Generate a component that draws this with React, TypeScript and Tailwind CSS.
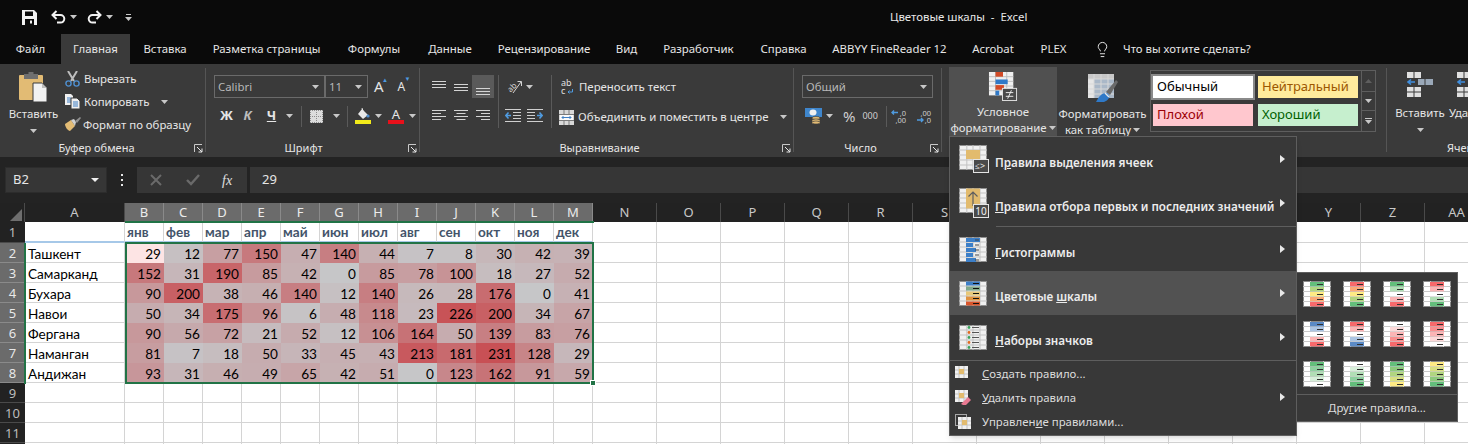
import type { ReactNode } from 'react'
import { Lightbulb } from 'lucide-react'

const UI = "font-['Noto_Sans','Open_Sans',sans-serif]"

const months = ['янв', 'фев', 'мар', 'апр', 'май', 'июн', 'июл', 'авг', 'сен', 'окт', 'ноя', 'дек']
const cities: [string, number[]][] = [
  ['Ташкент', [29, 12, 77, 150, 47, 140, 44, 7, 8, 30, 42, 39]],
  ['Самарканд', [152, 31, 190, 85, 42, 0, 85, 78, 100, 18, 27, 52]],
  ['Бухара', [90, 200, 38, 46, 140, 12, 140, 26, 28, 176, 0, 41]],
  ['Навои', [50, 34, 175, 96, 6, 48, 118, 23, 226, 200, 34, 67]],
  ['Фергана', [90, 56, 72, 21, 52, 12, 106, 164, 50, 139, 83, 76]],
  ['Наманган', [81, 7, 18, 50, 33, 45, 43, 213, 181, 231, 128, 29]],
  ['Андижан', [93, 31, 46, 49, 65, 42, 51, 0, 123, 162, 91, 59]],
]
const columns = ['B', 'C', 'D', 'E', 'F', 'G', 'H', 'I', 'J', 'K', 'L', 'M']
const restColumns = ['N', 'O', 'P', 'Q', 'R', 'S', 'T', 'U', 'V', 'W', 'X', 'Y', 'Z', 'AA']

const tabs: [string, string][] = [
  ['Файл', 'w-[61px]'],
  ['Главная', 'w-[69px] bg-[#3a3a3a]'],
  ['Вставка', 'w-[70px]'],
  ['Разметка страницы', 'w-[133px]'],
  ['Формулы', 'w-[82px]'],
  ['Данные', 'w-[70px]'],
  ['Рецензирование', 'w-[118px]'],
  ['Вид', 'w-[47px]'],
  ['Разработчик', 'w-[97px]'],
  ['Справка', 'w-[73px]'],
  ['ABBYY FineReader 12', 'w-[139px]'],
  ['Acrobat', 'w-[68px]'],
  ['PLEX', 'w-[53px]'],
]

const scales = [
  ['#63be7b', '#b1d580', '#ffeb84', '#fbaa77', '#f8696b'],
  ['#f8696b', '#fbaa77', '#ffeb84', '#b1d580', '#63be7b'],
  ['#63be7b', '#b1deb5', '#ffffff', '#fbb4b5', '#f8696b'],
  ['#f8696b', '#fbb4b5', '#ffffff', '#b1deb5', '#63be7b'],
  ['#5a8ac6', '#acc5e3', '#ffffff', '#fcb5b5', '#f8696b'],
  ['#f8696b', '#fcb5b5', '#ffffff', '#acc5e3', '#5a8ac6'],
  ['#ffffff', '#fddada', '#fcb4b5', '#fa8f90', '#f8696b'],
  ['#f8696b', '#fa8f90', '#fcb4b5', '#fddada', '#ffffff'],
  ['#63be7b', '#8ed09f', '#b1deb5', '#d8efda', '#ffffff'],
  ['#ffffff', '#d8efda', '#b1deb5', '#8ed09f', '#63be7b'],
  ['#63be7b', '#8dc97c', '#b1d580', '#d8e082', '#ffeb84'],
  ['#ffeb84', '#d8e082', '#b1d580', '#8dc97c', '#63be7b'],
]

// colour scale for the value cells, selection tint included
function cellColor(v: number) {
  const t = v / 231
  const r = Math.round(198 + 2 * t)
  const g = Math.round(198 - 118 * t)
  const b = Math.round(200 - 115 * t)
  return `rgb(${r},${g},${b})`
}

function Caret({ className = '' }: { className?: string }) {
  return (
    <svg width="7" height="4" viewBox="0 0 7 4" className={className}>
      <path d="M0 0h7L3.5 4z" fill="#c8c8c8" />
    </svg>
  )
}

function Launcher() {
  return (
    <svg width="9" height="9" viewBox="0 0 9 9" className="justify-self-end">
      <path d="M.5 8V.5H8" fill="none" stroke="#c8c8c8" />
      <path d="M3 3l5 5M8 4.5V8H4.5" fill="none" stroke="#e8e8e8" />
    </svg>
  )
}

function GroupLabel({ text, shift }: { text: string; shift: string }) {
  return (
    <div className="grid grid-cols-[1fr_auto_1fr] items-center h-[16px] text-[11px] text-[#e6e6e6] pr-[2px]">
      <span />
      <span className={shift}>{text}</span>
      <Launcher />
    </div>
  )
}

function Sep() {
  return <div className="w-px h-[84px] mt-1 bg-[#555555] shrink-0" />
}

function ThinSep({ h = 'h-[21px]' }: { h?: string }) {
  return <div className={`w-px ${h} bg-[#5a5a5a] shrink-0`} />
}

function Combo({ text, w }: { text: string; w: string }) {
  return (
    <div className={`${w} h-[23px] border border-[#6a6a6a] flex items-center justify-between pl-[3px] pr-[5px] text-[11.4px] text-[#b8b8b8]`}>
      <span>{text}</span>
      <Caret />
    </div>
  )
}

// ---- ribbon icons ----
function SaveIcon() {
  return (
    <svg width="15" height="15" viewBox="0 0 15 15">
      <path d="M0 0h12l3 3v12H0z" fill="#f2f2f2" />
      <rect x="3" y="1.5" width="8" height="4.5" fill="#0a0a0a" />
      <rect x="3" y="9" width="9" height="6" fill="#0a0a0a" />
      <rect x="8" y="10.5" width="2" height="3" fill="#f2f2f2" />
    </svg>
  )
}

function UndoIcon({ flip = false }: { flip?: boolean }) {
  return (
    <svg width="15" height="14" viewBox="0 0 15 14" className={flip ? '-scale-x-100' : ''}>
      <path d="M5.5 1L1.5 5l4 4M2 5h7.5a3.8 3.8 0 0 1 0 7.6H6" fill="none" stroke="#f2f2f2" strokeWidth="2" />
    </svg>
  )
}

function PasteIcon() {
  return (
    <svg width="29" height="31" viewBox="0 0 29 31">
      <rect x="0" y="3" width="24" height="25" rx="1" fill="#e2bb74" />
      <rect x="5" y="2" width="14" height="5" fill="#6f6f6f" />
      <rect x="9.5" y="0" width="5" height="3" fill="#6f6f6f" />
      <path d="M14 11h9l5 5v14H14z" fill="#f2f2f2" stroke="#3a3a3a" />
      <path d="M23 11v5h5" fill="#bdbdbd" />
    </svg>
  )
}

function CutIcon() {
  return (
    <svg width="15" height="16" viewBox="0 0 15 16">
      <path d="M3 0l6 10M12 0L6 10" stroke="#bdbdbd" strokeWidth="2" fill="none" />
      <circle cx="3.5" cy="12.5" r="2.6" fill="none" stroke="#4f8fd0" strokeWidth="1.4" />
      <circle cx="11.5" cy="12.5" r="2.6" fill="none" stroke="#4f8fd0" strokeWidth="1.4" />
    </svg>
  )
}

function CopyIcon() {
  return (
    <svg width="15" height="15" viewBox="0 0 15 15">
      <path d="M0 0h6l2 2v9H0z" fill="#f0f0f0" />
      <path d="M2 4h4M2 6h4M2 8h4" stroke="#3f7fc4" />
      <path d="M6 4h6l3 3v8H6z" fill="#f0f0f0" stroke="#3a3a3a" />
      <path d="M8 8h5M8 10h5M8 12h5" stroke="#3f7fc4" />
    </svg>
  )
}

function BrushIcon() {
  return (
    <svg width="17" height="15" viewBox="0 0 17 15">
      <path d="M1 7l6-4 4 6-5 5c-2 0-5-4-5-7z" fill="#e2bb74" />
      <path d="M7 3l3-1 2 3-1 4z" fill="#d0d0d0" />
      <path d="M11 4l5-4 1 1-4 5z" fill="#8f8f8f" />
    </svg>
  )
}

function BorderIcon() {
  return (
    <svg width="13" height="13" viewBox="0 0 13 13">
      <rect width="13" height="13" fill="#dcdcdc" />
      <path d="M0 .5h13M0 12.5h13M.5 0v13M12.5 0v13M0 6.5h13M6.5 0v13" stroke="#8c8c8c" strokeDasharray="1 1" />
    </svg>
  )
}

function FillIcon() {
  return (
    <svg width="16" height="16" viewBox="0 0 16 16">
      <path d="M7 1l6 6-5 4-5-5z" fill="#e8e8e8" />
      <circle cx="13" cy="8" r="1.6" fill="#4f8fd0" />
      <path d="M7 0l1 3" stroke="#e8e8e8" />
      <rect x="0" y="12" width="16" height="4" fill="#f2ea1a" />
    </svg>
  )
}

function AlignIcon({ v, h }: { v: 'top' | 'mid' | 'bot' | 'none'; h?: 'l' | 'c' | 'r' }) {
  const ys = v === 'top' ? [2, 5, 8] : v === 'mid' ? [5, 8, 11] : v === 'bot' ? [9, 12, 15] : [2, 5, 8, 11]
  const seg = (i: number) => {
    if (!h) return 'M0 0h14'
    const short = i % 2 === 1
    if (h === 'l') return short ? 'M0 0h9' : 'M0 0h14'
    if (h === 'c') return short ? 'M2.5 0h9' : 'M0 0h14'
    return short ? 'M5 0h9' : 'M0 0h14'
  }
  return (
    <svg width="14" height="16" viewBox="0 0 14 16">
      {ys.map((y, i) => (
        <path key={i} d={seg(i)} transform={`translate(0 ${y + 0.5})`} stroke="#d4d4d4" fill="none" />
      ))}
    </svg>
  )
}

function IndentIcon({ flip = false }: { flip?: boolean }) {
  return (
    <svg width="16" height="14" viewBox="0 0 16 14" className={flip ? '-scale-x-100' : ''}>
      <path d="M0 .5h16M8 3.5h8M8 6.5h8M8 9.5h8M0 12.5h16" stroke="#cfcfcf" fill="none" />
      <path d="M6 6.5H1M3.5 3.5L.8 6.5l2.7 3" stroke="#4f9be0" strokeWidth="1.6" fill="none" />
    </svg>
  )
}

function AngleIcon() {
  return (
    <svg width="17" height="17" viewBox="0 0 17 17">
      <text x="1" y="12" fontSize="8" fill="#d4d4d4" transform="rotate(-45 6 9)" fontFamily="Noto Sans">ab</text>
      <path d="M7 15L15 4M11.5 3.5H15.5V8" stroke="#d4d4d4" fill="none" />
    </svg>
  )
}

function WrapIcon() {
  return (
    <svg width="13" height="16" viewBox="0 0 13 16">
      <text x="0" y="7" fontSize="9" fill="#e0e0e0" fontFamily="Noto Sans">ab</text>
      <text x="0" y="15" fontSize="9" fill="#e0e0e0" fontFamily="Noto Sans">c</text>
      <path d="M11.5 10v3H7M8.5 11.5L7 13l1.5 1.5" stroke="#4f9be0" fill="none" />
    </svg>
  )
}

function MergeIcon() {
  return (
    <svg width="15" height="15" viewBox="0 0 15 15">
      <rect width="15" height="15" fill="#d8d8d8" />
      <path d="M0 4.5h15M0 10.5h15M5 0v4M10 0v4M5 11v4M10 11v4" stroke="#7a7a7a" />
      <rect x="1" y="5" width="13" height="5" fill="#fafafa" />
      <path d="M3 7.5h9M4.5 6L3 7.5 4.5 9M10.5 6L12 7.5 10.5 9" stroke="#3f7fc4" fill="none" />
    </svg>
  )
}

function MoneyIcon() {
  return (
    <svg width="17" height="16" viewBox="0 0 17 16">
      <rect x="0" y="0" width="17" height="9" fill="#3f86cc" />
      <ellipse cx="8" cy="4.5" rx="3.5" ry="3" fill="#f0f0f0" />
      <ellipse cx="11" cy="10" rx="4" ry="1.6" fill="#e2bb74" stroke="#3a3a3a" strokeWidth=".6" />
      <ellipse cx="11" cy="12.5" rx="4" ry="1.6" fill="#e2bb74" stroke="#3a3a3a" strokeWidth=".6" />
      <ellipse cx="11" cy="14.5" rx="4" ry="1.5" fill="#e2bb74" stroke="#3a3a3a" strokeWidth=".6" />
    </svg>
  )
}

function DecimalIcon({ top, bottom, up }: { top: string; bottom: string; up: boolean }) {
  return (
    <svg width="16" height="15" viewBox="0 0 16 15">
      <text x="15" y="6.5" textAnchor="end" fontSize="7.5" fill="#cfcfcf" fontFamily="Noto Sans">{top}</text>
      <text x="15" y="14" textAnchor="end" fontSize="7.5" fill="#cfcfcf" fontFamily="Noto Sans">{bottom}</text>
      {up ? (
        <path d="M7 3.5H1M3 1.5L1 3.5l2 2" stroke="#4f9be0" strokeWidth="1.4" fill="none" />
      ) : (
        <path d="M1 11h6M5 9l2 2-2 2" stroke="#4f9be0" strokeWidth="1.4" fill="none" />
      )}
    </svg>
  )
}

function SheetBase({ children, w = 28, h = 25 }: { children?: ReactNode; w?: number; h?: number }) {
  const xs = [w * 0.28, w * 0.5, w * 0.75]
  const ys = [h * 0.2, h * 0.4, h * 0.6, h * 0.8]
  return (
    <>
      <rect x=".5" y=".5" width={w - 1} height={h - 1} fill="#f0f0f0" stroke="#8f8f8f" />
      {xs.map((x) => (
        <path key={x} d={`M${x} 0v${h}`} stroke="#c2c2c2" />
      ))}
      {ys.map((y) => (
        <path key={y} d={`M0 ${y}h${w}`} stroke="#c2c2c2" />
      ))}
      {children}
    </>
  )
}

function SubBox({ x, y, w, h, children }: { x: number; y: number; w: number; h: number; children?: ReactNode }) {
  return (
    <>
      <rect x={x} y={y} width={w} height={h} fill="#4a4a4a" stroke="#e4e4e4" />
      {children}
    </>
  )
}

function CondFormatIcon() {
  return (
    <svg width="30" height="31" viewBox="0 0 30 31">
      <rect x="0" y="0" width="26" height="25" fill="#f0f0f0" />
      <path d="M0 5h26M0 10h26M0 15h26M0 20h26M7 0v25M19 0v25" stroke="#bdbdbd" />
      <rect x="7" y="0" width="8" height="5" fill="#d24a26" />
      <rect x="7" y="8" width="13" height="5" fill="#2f79c8" />
      <rect x="7" y="14" width="9" height="5" fill="#d24a26" />
      <rect x="7" y="20" width="4" height="5" fill="#2f79c8" />
      <SubBox x={14.5} y={17.5} w={15} h={13}>
        <path d="M18 22h8M18 26h8M24 19.5l-4 9" stroke="#f0f0f0" fill="none" />
      </SubBox>
    </svg>
  )
}

function TableFormatIcon() {
  return (
    <svg width="30" height="29" viewBox="0 0 30 29">
      <rect x="0" y="0" width="26" height="24" fill="#aab8c8" />
      <rect x="0" y="0" width="26" height="5" fill="#c8c8c8" />
      <rect x="0" y="5" width="6" height="19" fill="#e6e6e6" />
      <path d="M0 5h26M0 10h26M0 15h26M0 20h26M6 0v24M13 0v24M20 0v24" stroke="#d8d8d8" />
      <path d="M18 18L28 6l2 2-8 13z" fill="#6a6a6a" />
      <path d="M8 28c3-6 6-9 10-9 2 0 4 2 3 5-1 2-3 3-5 4z" fill="#2f79c8" />
      <path d="M17 19l4 4" stroke="#e8e8e8" strokeWidth="1.4" />
    </svg>
  )
}

function InsertCellsIcon() {
  return (
    <svg width="26" height="25" viewBox="0 0 26 25">
      <path d="M0 0h14v6H0zM0 15h14v10H0z" fill="#e0e0e0" />
      <path d="M7 0v6M0 20h14M7 15v10" stroke="#3a3a3a" />
      <path d="M11 7h15v6H11z" fill="#9aa8b8" />
      <path d="M18 7v6" stroke="#3a3a3a" />
      <path d="M8 10H1M4 7.5L1 10l3 2.5" stroke="#3f8fdf" strokeWidth="1.6" fill="none" />
    </svg>
  )
}

// ---- menu icons ----
function RulesIcon() {
  return (
    <svg width="31" height="28" viewBox="0 0 31 28">
      <SheetBase>
        <rect x="7" y="5" width="14" height="9" fill="#e2bb6e" />
      </SheetBase>
      <SubBox x={14.5} y={14.5} w={15} h={13}>
        <text x="16" y="24" fontSize="9" fill="#f0f0f0" fontFamily="Noto Sans">{'≤>'}</text>
      </SubBox>
    </svg>
  )
}

function TopTenIcon() {
  return (
    <svg width="31" height="30" viewBox="0 0 31 30">
      <SheetBase>
        <rect x="7" y="0.5" width="14" height="20" fill="#e2bb6e" />
        <path d="M14 18V4M9.5 8.5L14 4l4.5 4.5" stroke="#5f5f5f" strokeWidth="1.2" fill="none" />
      </SheetBase>
      <SubBox x={14.5} y={16.5} w={15} h={13}>
        <text x="22" y="26.5" textAnchor="middle" fontSize="10" fill="#f0f0f0" fontFamily="Noto Sans">10</text>
      </SubBox>
    </svg>
  )
}

function DataBarsIcon() {
  return (
    <svg width="28" height="25" viewBox="0 0 28 25">
      <SheetBase>
        {[[0, 14], [5, 7], [10, 10], [15, 7], [20, 10]].map(([y, w]) => (
          <g key={y}>
            <rect x="7" y={y + 1} width={w} height="4" fill="#3c7fc8" />
            <path d={`M16 ${y + 3}h4`} stroke="#444444" />
          </g>
        ))}
      </SheetBase>
    </svg>
  )
}

function ColorScaleIcon() {
  const rows = ['#3c7fc8', '#7fa88c', '#e8c878', '#e0923e', '#d9552a']
  return (
    <svg width="28" height="25" viewBox="0 0 28 25">
      <SheetBase>
        {rows.map((c, i) => (
          <g key={c}>
            <rect x="7" y={i * 5 + 0.5} width="14" height="4" fill={c} />
            <path d={`M14 ${i * 5 + 2.5}h6`} stroke="#111111" />
          </g>
        ))}
      </SheetBase>
    </svg>
  )
}

function IconSetsIcon() {
  const dots = ['#3aa35c', '#e06a20', '#3aa35c', '#e06a20', '#3aa35c']
  return (
    <svg width="28" height="25" viewBox="0 0 28 25">
      <SheetBase>
        {dots.map((c, i) => (
          <g key={i}>
            <circle cx="10" cy={i * 5 + 2.5} r="1.4" fill={c} />
            <path d={`M13 ${i * 5 + 2.5}h7`} stroke="#555555" />
          </g>
        ))}
      </SheetBase>
    </svg>
  )
}

function SmallRule({ variant }: { variant: 'new' | 'clear' | 'manage' }) {
  if (variant === 'manage') {
    return (
      <svg width="16" height="15" viewBox="0 0 16 15">
        <rect x=".5" y=".5" width="11" height="11" fill="none" stroke="#a8a8a8" />
        <rect x="3" y="3" width="13" height="12" fill="#f0f0f0" />
        <path d="M3 7h13M3 11h13M7 3v12M12 3v12" stroke="#c2c2c2" />
        <rect x="7" y="6" width="5" height="5" fill="#e2bb6e" />
      </svg>
    )
  }
  return (
    <svg width="16" height="15" viewBox="0 0 16 15">
      <rect x="0" y="0" width="13" height="12" fill="#f0f0f0" />
      <path d="M0 4h13M0 8h13M4 0v12M9 0v12" stroke="#c2c2c2" />
      <rect x="4" y="3" width="5" height="5" fill="#e2bb6e" />
      {variant === 'clear' && <path d="M6 14l7-7 3 3-5 5H8z" fill="#e87a92" />}
    </svg>
  )
}

function ScaleThumb({ colors }: { colors: string[] }) {
  return (
    <svg width="28" height="26" viewBox="0 0 28 26">
      <rect x=".5" y=".5" width="27" height="25" fill="#ffffff" stroke="#8a8a8a" />
      <path d="M0 5.5h28M0 10.5h28M0 15.5h28M0 20.5h28M7.5 0v26M20.5 0v26" stroke="#c8c8c8" />
      {colors.map((c, i) => (
        <g key={i}>
          <rect x="7" y={i * 5 + 1} width="14" height="4.4" fill={c} />
          <path d={`M14 ${i * 5 + 3.5}h6`} stroke="#303030" />
        </g>
      ))}
    </svg>
  )
}

function Arrow() {
  return (
    <svg width="5" height="8" viewBox="0 0 5 8">
      <path d="M0 0l5 4-5 4z" fill="#e8e8e8" />
    </svg>
  )
}

function BigRow({ icon, label, active }: { icon: ReactNode; label: ReactNode; active?: boolean }) {
  return (
    <div className={`h-[44px] flex items-center pl-[9px] pr-[11px] ${active ? 'bg-[#525252]' : ''}`}>
      <div className="w-[36px] shrink-0 flex">{icon}</div>
      <span className="flex-1 text-[11.7px] font-semibold text-[#ececec] pt-[8px] whitespace-nowrap">{label}</span>
      <Arrow />
    </div>
  )
}

function SmallRow({ icon, label, arrow }: { icon: ReactNode; label: ReactNode; arrow?: boolean }) {
  return (
    <div className="h-[24px] flex items-center pl-[5px] pr-[11px]">
      <div className="w-[27px] shrink-0 flex">{icon}</div>
      <span className="flex-1 text-[11.4px] text-[#dcdcdc] pt-[2px]">{label}</span>
      {arrow && <Arrow />}
    </div>
  )
}

function RowHeader({ n, on }: { n: number; on?: boolean }) {
  return (
    <div className={`flex items-center justify-center pt-[2px] text-[13px] border-b ${UI} ${on ? 'bg-[#6b6b6b] text-[#e8e8e8] border-[#8a8a8a]' : 'bg-[#222222] text-[#bcbcbc] border-[#4a4a4a]'}`}>
      {n}
    </div>
  )
}

export default function App() {
  return (
    <div className={`relative w-[1468px] h-[444px] overflow-hidden bg-white ${UI}`}>
      {/* Title bar + tabs */}
      <div className="bg-[#0a0a0a] h-[64px] flex flex-col">
        <div className="h-[34px] flex items-center text-[11.4px] text-[#e8e8e8]">
          <div className="w-[890px] flex items-center pl-[22px]">
            <SaveIcon />
            <div className="ml-[14px]"><UndoIcon /></div>
            <Caret className="ml-[4px]" />
            <div className="ml-[10px]"><UndoIcon flip /></div>
            <Caret className="ml-[4px]" />
            <svg width="7" height="7" viewBox="0 0 7 7" className="ml-[12px]">
              <path d="M1 .5h5" stroke="#c8c8c8" />
              <path d="M0 3h7L3.5 7z" fill="#c8c8c8" />
            </svg>
          </div>
          <span className="whitespace-pre">Цветовые шкалы  -  Excel</span>
        </div>
        <div className="h-[30px] flex text-[11.4px] text-[#e6e6e6]">
          {tabs.map(([name, cls]) => (
            <div key={name} className={`${cls} flex items-center justify-center whitespace-nowrap`}>{name}</div>
          ))}
          <div className="flex items-center ml-[14px]">
            <Lightbulb size={17} strokeWidth={1.4} className="text-[#e6e6e6]" />
            <span className="ml-[12px]">Что вы хотите сделать?</span>
          </div>
        </div>
      </div>

      {/* Ribbon */}
      <div className="h-[93px] bg-[#3a3a3a] flex text-[#e6e6e6] overflow-hidden">
        {/* Clipboard */}
        <div className="w-[205px] shrink-0 flex flex-col">
          <div className="h-[76px] flex pt-[8px]">
            <div className="w-[65px] pl-[2px] flex flex-col items-center">
              <PasteIcon />
              <span className="text-[11.4px] mt-[2px] leading-[17px]">Вставить</span>
              <Caret className="mt-[7px]" />
            </div>
            <div className="flex flex-col text-[11.4px] -mt-[5px]">
              <div className="h-[23px] flex items-center gap-[4px]"><CutIcon /><span>Вырезать</span></div>
              <div className="h-[23px] flex items-center gap-[4px]"><CopyIcon /><span>Копировать</span><Caret className="ml-[8px]" /></div>
              <div className="h-[23px] -ml-[1px] flex items-center gap-[2px]"><BrushIcon /><span>Формат по образцу</span></div>
            </div>
          </div>
          <GroupLabel text="Буфер обмена" shift="mr-[10px]" />
        </div>
        <Sep />
        {/* Font */}
        <div className="w-[213px] shrink-0 flex flex-col">
          <div className="h-[76px] pt-[11px] pl-[8px]">
            <div className="flex items-center">
              <Combo text="Calibri" w="w-[111px]" />
              <Combo text="11" w="w-[43px]" />
              <span className="ml-[6px] text-[15px] leading-none relative">A<span className="absolute -top-[2px] left-[8px] text-[6px] text-[#4f9be0]">▲</span></span>
              <span className="ml-[14px] text-[12px] leading-none relative">A<span className="absolute -top-[5px] left-[7px] text-[6px] text-[#4f9be0]">▼</span></span>
            </div>
            <div className="flex items-center mt-[7px] h-[22px]">
              <span className="w-[21px] ml-[2px] text-center text-[13px] font-bold">Ж</span>
              <span className="w-[21px] text-center text-[13px] font-bold italic text-[#bcbcbc]">К</span>
              <span className="w-[27px] text-center text-[13px] font-bold underline">Ч</span>
              <Caret className="ml-[1px]" />
              <div className="ml-[8px]"><ThinSep /></div>
              <div className="ml-[8px]"><BorderIcon /></div>
              <Caret className="ml-[10px]" />
              <div className="ml-[7px]"><ThinSep /></div>
              <div className="ml-[7px]"><FillIcon /></div>
              <Caret className="ml-[4px]" />
              <div className="ml-[6px] w-[16px] flex flex-col items-center">
                <span className="text-[13px] leading-[12px]">A</span>
                <div className="w-[16px] h-[4px] bg-[#e8101a]" />
              </div>
              <Caret className="ml-[5px]" />
            </div>
          </div>
          <GroupLabel text="Шрифт" shift="mr-[16px]" />
        </div>
        <Sep />
        {/* Alignment */}
        <div className="w-[373px] shrink-0 flex flex-col">
          <div className="h-[76px] pt-[11px] flex">
            <div className="pl-[8px] flex flex-col">
              <div className="flex items-center h-[23px]">
                <div className="w-[22px] flex justify-center"><AlignIcon v="top" /></div>
                <div className="w-[22px] flex justify-center"><AlignIcon v="mid" /></div>
                <div className="w-[22px] h-[23px] bg-[#5a5a5a] flex items-center justify-center"><AlignIcon v="bot" /></div>
              </div>
              <div className="flex items-center mt-[7px] h-[22px]">
                <div className="w-[22px] flex justify-center"><AlignIcon v="none" h="l" /></div>
                <div className="w-[22px] flex justify-center"><AlignIcon v="none" h="c" /></div>
                <div className="w-[22px] flex justify-center"><AlignIcon v="none" h="r" /></div>
              </div>
            </div>
            <div className="ml-[4px] h-[53px] w-px bg-[#5a5a5a]" />
            <div className="w-[52px] pl-[6px] flex flex-col">
              <div className="h-[23px] flex items-center gap-[3px] pl-[1px]"><AngleIcon /><Caret /></div>
              <div className="h-[22px] mt-[7px] flex items-center gap-[6px]"><IndentIcon /><IndentIcon flip /></div>
            </div>
            <div className="h-[53px] w-px bg-[#5a5a5a]" />
            <div className="pl-[9px] flex flex-col text-[11.4px] whitespace-nowrap">
              <div className="h-[23px] flex items-center gap-[5px]"><WrapIcon /><span>Переносить текст</span></div>
              <div className="h-[22px] mt-[8px] -ml-[2px] flex items-center gap-[4px]"><MergeIcon /><span>Объединить и поместить в центре</span><Caret className="ml-[8px]" /></div>
            </div>
          </div>
          <GroupLabel text="Выравнивание" shift="mr-[12px]" />
        </div>
        <Sep />
        {/* Number */}
        <div className="w-[147px] shrink-0 flex flex-col">
          <div className="h-[76px] pt-[11px] pl-[8px]">
            <Combo text="Общий" w="w-[131px]" />
            <div className="flex items-center mt-[7px] h-[22px]">
              <div className="ml-[3px]"><MoneyIcon /></div>
              <Caret className="ml-[4px]" />
              <span className="ml-[10px] text-[15px] text-[#cfcfcf]">%</span>
              <span className="ml-[7px] text-[9px] text-[#cfcfcf]">000</span>
              <div className="ml-[8px]"><ThinSep /></div>
              <div className="ml-[4px]"><DecimalIcon top=",0" bottom=",00" up /></div>
              <div className="ml-[9px]"><DecimalIcon top=",00" bottom=",0" up={false} /></div>
            </div>
          </div>
          <GroupLabel text="Число" shift="mr-[12px]" />
        </div>
        <Sep />
        {/* Styles */}
        <div className="shrink-0 flex pl-[7px]">
          <div className="w-[108px] shrink-0 h-[69px] mt-[3px] bg-[#505050] flex flex-col items-center pt-[5px] text-[11.4px]">
            <CondFormatIcon />
            <span className="leading-[16px] mt-[3px]">Условное</span>
            <span className="leading-[16px] whitespace-nowrap flex items-center gap-[2px]">форматирование<Caret /></span>
          </div>
          <div className="w-[91px] shrink-0 mt-[3px] flex flex-col items-center pt-[7px] text-[11.4px]">
            <TableFormatIcon />
            <span className="leading-[16px] mt-[3px] whitespace-nowrap">Форматировать</span>
            <span className="leading-[16px] whitespace-nowrap flex items-center gap-[2px]">как таблицу<Caret /></span>
          </div>
          <div className="ml-[2px] w-[226px] shrink-0 h-[62px] mt-[6px] border border-[#5e5e5e] flex text-[13px]">
            <div className="grid grid-cols-[100px_100px] content-start gap-x-[5px] gap-y-[6px] pl-[2px] pt-[5px] w-[211px]">
              <div className="bg-white text-black flex items-center pl-[4px] h-[22px] outline-2 outline-[#8a8a8a]">Обычный</div>
              <div className="bg-[#ffeb9c] text-[#9c5700] flex items-center pl-[4px] h-[22px]">Нейтральный</div>
              <div className="bg-[#ffc7ce] text-[#9c0006] flex items-center pl-[4px] h-[22px]">Плохой</div>
              <div className="bg-[#c6efce] text-[#006100] flex items-center pl-[4px] h-[22px]">Хороший</div>
            </div>
            <div className="w-[14px] flex flex-col border-l border-[#5e5e5e]">
              <div className="h-[21px] flex items-center justify-center border-b border-[#5e5e5e]">
                <svg width="7" height="4" viewBox="0 0 7 4"><path d="M0 4h7L3.5 0z" fill="#5e5e5e" /></svg>
              </div>
              <div className="h-[19px] flex items-center justify-center border-b border-[#5e5e5e]"><Caret /></div>
              <div className="flex-1 flex flex-col items-center justify-center gap-[1px]">
                <div className="w-[7px] h-px bg-[#c8c8c8]" />
                <Caret />
              </div>
            </div>
          </div>
          <div className="ml-[10px]"><Sep /></div>
          <div className="w-[66px] flex flex-col items-center pt-[8px] text-[11.4px] shrink-0">
            <InsertCellsIcon />
            <span className="mt-[7px] leading-[17px]">Вставить</span>
            <Caret className="mt-[7px]" />
          </div>
          <div className="-ml-[4px] flex flex-col pt-[8px] text-[11.4px] whitespace-nowrap shrink-0">
            <div className="pl-[8px] h-[25px]"><InsertCellsIcon /></div>
            <span className="mt-[7px] leading-[17px]">Удалить</span>
            <span className="mt-[18px] leading-[17px] text-[11px] -ml-[2px]">Ячейки</span>
          </div>
        </div>
      </div>

      {/* Formula bar */}
      <div className="h-[46px] bg-[#232323] pt-[10px]">
        <div className="h-[26px] flex items-stretch">
          <div className="ml-[5px] w-[102px] bg-[#363636] border border-[#2c2c2c] flex items-center justify-between pl-[7px] pr-[7px] text-[13px] text-[#e6e6e6]">
            <span>B2</span>
            <svg width="8" height="4" viewBox="0 0 8 4"><path d="M0 0h8L4 4z" fill="#f0f0f0" /></svg>
          </div>
          <div className="w-[30px] flex flex-col items-center justify-center gap-[3px]">
            <span className="w-[2px] h-[2px] bg-[#e6e6e6]" />
            <span className="w-[2px] h-[2px] bg-[#e6e6e6]" />
            <span className="w-[2px] h-[2px] bg-[#e6e6e6]" />
          </div>
          <div className="w-[110px] bg-[#363636] flex items-center">
            <svg width="12" height="12" viewBox="0 0 12 12" className="ml-[13px]"><path d="M1 1l10 10M11 1L1 11" stroke="#6a6a6a" strokeWidth="2" /></svg>
            <svg width="14" height="12" viewBox="0 0 14 12" className="ml-[24px]"><path d="M1 6l4 4 8-9" fill="none" stroke="#6a6a6a" strokeWidth="2.4" /></svg>
            <span className="ml-[22px] font-['Liberation_Serif',serif] italic text-[14px] text-[#e0e0e0]">fx</span>
          </div>
          <div className="ml-[3px] flex-1 bg-[#363636] flex items-center pl-[12px] text-[13px] text-[#e6e6e6]">29</div>
        </div>
      </div>

      {/* Sheet */}
      <div className="relative grid grid-cols-[25px_100px_repeat(12,39px)_repeat(14,64px)] grid-rows-[10px_19px_21px_repeat(11,20px)] -mt-[10px] text-[13.6px] text-black font-['Lato','Open_Sans',sans-serif]">
        <div className="col-span-full" />
        {/* column headers */}
        <div className="bg-[#222222] flex items-end justify-end border-r border-[#4a4a4a]">
          <svg width="12" height="12" viewBox="0 0 12 12" className="mr-[2px] mb-[1px]"><path d="M12 0v12H0z" fill="#6e6e6e" /></svg>
        </div>
        <div className={`bg-[#222222] text-[#c8c8c8] flex items-center justify-center text-[13px] border-r border-[#4a4a4a] ${UI}`}>A</div>
        {columns.map((c) => (
          <div key={c} className={`bg-[#6b6b6b] text-[#ececec] flex items-center justify-center text-[13px] border-r border-[#8a8a8a] ${UI}`}>{c}</div>
        ))}
        {restColumns.map((c) => (
          <div key={c} className={`bg-[#222222] text-[#c8c8c8] flex items-center justify-center text-[13px] border-r border-[#4a4a4a] ${UI}`}>{c}</div>
        ))}

        {/* row 1 */}
        <RowHeader n={1} />
        <div className="border-r border-b-2 border-r-[#d4d4d4] border-b-[#a6c8e8]" />
        {months.map((m) => (
          <div key={m} className="border-r border-b-2 border-r-[#d4d4d4] border-b-[#a6c8e8] flex items-center pl-[2px] pt-[1px] font-bold text-[#44546a]">{m}</div>
        ))}
        {restColumns.map((c) => (
          <div key={c} className="border-r border-b border-[#d4d4d4]" />
        ))}

        {/* data rows */}
        {cities.map(([city, values], r) => (
          <div key={city} className="contents">
            <RowHeader n={r + 2} on />
            <div className="border-r border-b border-[#d4d4d4] flex items-center pl-[3px] pt-[3px] whitespace-nowrap">{city}</div>
            {values.map((v, c) => (
              <div
                key={c}
                className="flex items-center justify-end pr-[3px] pt-[3px]"
                style={{ backgroundColor: r === 0 && c === 0 ? '#fde4e4' : cellColor(v) }}
              >
                {v}
              </div>
            ))}
            {restColumns.map((c) => (
              <div key={c} className="border-r border-b border-[#d4d4d4]" />
            ))}
          </div>
        ))}

        {/* empty rows */}
        {[9, 10, 11, 12].map((n) => (
          <div key={n} className="contents">
            <RowHeader n={n} />
            <div className="border-r border-b border-[#d4d4d4]" />
            {columns.map((c) => (
              <div key={c} className="border-r border-b border-[#d4d4d4]" />
            ))}
            {restColumns.map((c) => (
              <div key={c} className="border-r border-b border-[#d4d4d4]" />
            ))}
          </div>
        ))}

        {/* selection */}
        <div className="absolute left-[125px] top-[49px] w-[469px] h-[142px] border-2 border-[#217346] pointer-events-none">
          <div className="absolute -right-[4px] -bottom-[4px] w-[6px] h-[6px] bg-[#217346] border border-white" />
        </div>
        <div className="absolute left-[24px] top-[50px] w-[2px] h-[141px] bg-[#217346]" />
        <div className="absolute left-[125px] top-[28px] w-[469px] h-[2px] bg-[#217346]" />
      </div>

      {/* Conditional formatting menu */}
      <div className={`absolute left-[949px] top-[136px] w-[348px] h-[300px] bg-[#383838] border border-[#5e5e5e] shadow-md ${UI}`}>
        <BigRow icon={<RulesIcon />} label={<>П<u>р</u>авила выделения ячеек</>} />
        <BigRow icon={<TopTenIcon />} label={<><u>П</u>равила отбора первых и последних значений</>} />
        <div className="h-[2px] ml-[46px] border-b border-[#5e5e5e]" />
        <BigRow icon={<DataBarsIcon />} label={<><u>Г</u>истограммы</>} />
        <BigRow icon={<ColorScaleIcon />} label={<>Цветовые <u>ш</u>калы</>} active />
        <BigRow icon={<IconSetsIcon />} label={<><u>Н</u>аборы значков</>} />
        <div className="h-[2px] border-b border-[#5e5e5e]" />
        <SmallRow icon={<SmallRule variant="new" />} label={<><u>С</u>оздать правило...</>} />
        <SmallRow icon={<SmallRule variant="clear" />} label={<><u>У</u>далить правила</>} arrow />
        <SmallRow icon={<SmallRule variant="manage" />} label={<>Управлен<u>и</u>е правилами...</>} />
      </div>

      {/* Color scales submenu */}
      <div className={`absolute left-[1296px] top-[272px] w-[162px] h-[150px] bg-[#383838] border border-[#5e5e5e] flex flex-col ${UI}`}>
        <div className="grid grid-cols-[repeat(4,28px)] gap-x-[12px] gap-y-[14px] pl-[6px] pt-[8px]">
          {scales.map((colors, i) => (
            <ScaleThumb key={i} colors={colors} />
          ))}
        </div>
        <div className="mt-[7px] border-t border-[#5e5e5e] flex-1 flex items-center justify-center text-[11.4px] text-[#dcdcdc]">
          <span>Дру<u>г</u>ие правила...</span>
        </div>
      </div>
    </div>
  )
}
